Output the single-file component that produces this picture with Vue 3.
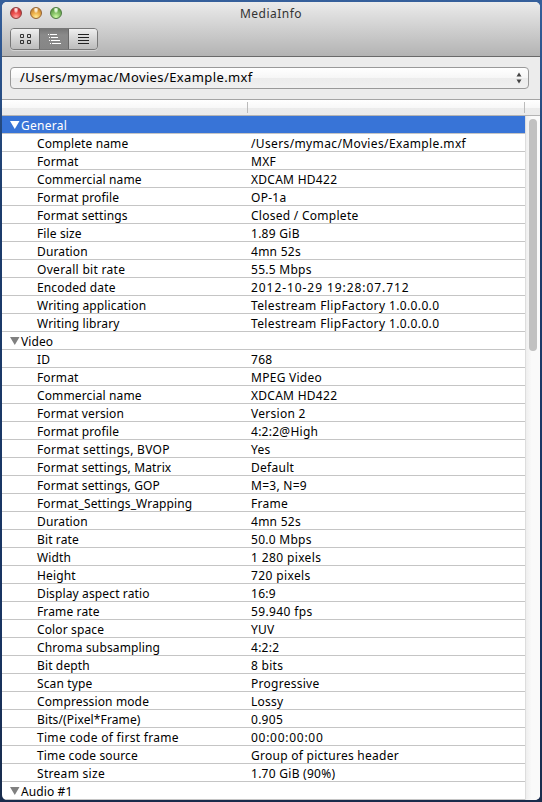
<script setup>
const general = [
  ['Complete name', '/Users/mymac/Movies/Example.mxf'],
  ['Format', 'MXF'],
  ['Commercial name', 'XDCAM HD422'],
  ['Format profile', 'OP-1a'],
  ['Format settings', 'Closed / Complete'],
  ['File size', '1.89 GiB'],
  ['Duration', '4mn 52s'],
  ['Overall bit rate', '55.5 Mbps'],
  ['Encoded date', '2012-10-29 19:28:07.712'],
  ['Writing application', 'Telestream FlipFactory 1.0.0.0.0'],
  ['Writing library', 'Telestream FlipFactory 1.0.0.0.0'],
]
const video = [
  ['ID', '768'],
  ['Format', 'MPEG Video'],
  ['Commercial name', 'XDCAM HD422'],
  ['Format version', 'Version 2'],
  ['Format profile', '4:2:2@High'],
  ['Format settings, BVOP', 'Yes'],
  ['Format settings, Matrix', 'Default'],
  ['Format settings, GOP', 'M=3, N=9'],
  ['Format_Settings_Wrapping', 'Frame'],
  ['Duration', '4mn 52s'],
  ['Bit rate', '50.0 Mbps'],
  ['Width', '1 280 pixels'],
  ['Height', '720 pixels'],
  ['Display aspect ratio', '16:9'],
  ['Frame rate', '59.940 fps'],
  ['Color space', 'YUV'],
  ['Chroma subsampling', '4:2:2'],
  ['Bit depth', '8 bits'],
  ['Scan type', 'Progressive'],
  ['Compression mode', 'Lossy'],
  ['Bits/(Pixel*Frame)', '0.905'],
  ['Time code of first frame', '00:00:00:00'],
  ['Time code source', 'Group of pictures header'],
  ['Stream size', '1.70 GiB (90%)'],
]
const sections = [
  { title: 'General', rows: general, selected: true },
  { title: 'Video', rows: video },
  { title: 'Audio #1', rows: [] },
]
const isDate = (v) => /^\d{4}-/.test(v)
const isTimecode = (v) => /^(\d\d:){3}/.test(v)
const isMixed = (v) => /^(\/|Tele|[\d. ]+ (pixels|fps))/.test(v)
const isLoose = (n) => /bit rate|first frame|Stream|BVOP/.test(n)
</script>

<template>
  <div class="desktop">
    <div class="window">
      <header class="toolbar">
        <div class="titlebar">
          <div class="lights">
            <i class="light red"></i><i class="light amber"></i><i class="light green"></i>
          </div>
          <div class="title">MediaInfo</div>
          <div class="balance"></div>
        </div>
        <div class="segments">
          <button class="segment">
            <svg width="12" height="12" viewBox="0 0 12 12" fill="none" stroke="#333" stroke-width="1">
              <path d="M.5 1.5h3v3h-3zM7.500 1.500h3v3h-3zM.5 7.500h3v3h-3zM7.500 7.500h3v3h-3z" />
            </svg>
          </button>
          <button class="segment active">
            <svg width="14" height="12" viewBox="0 0 14 12" stroke="#fff" stroke-width="1">
              <path d="M0 1.500h1M2 1.500h7M1 4.500h1M3 4.500h7M1 7.500h1M3 7.500h9M2 10.500h1M4 10.500h9" />
            </svg>
          </button>
          <button class="segment">
            <svg width="12" height="12" viewBox="0 0 12 12" stroke="#222" stroke-width="1">
              <path d="M0 1.500h11M0 4.500h11M0 7.500h11M0 10.500h11" />
            </svg>
          </button>
        </div>
      </header>
      <div class="chooser">
        <div class="popup">
          <span>/Users/mymac/Movies/Example.mxf</span>
          <svg width="6" height="12" viewBox="0 0 6 12" fill="#444">
            <path d="M3 .5L5.500 4.500H.5zM3 11.500L5.500 7.500H.5z" />
          </svg>
        </div>
      </div>
      <div class="columns">
        <div class="column"></div>
        <div class="column"></div>
      </div>
      <div class="body">
        <div class="list">
          <template v-for="s in sections" :key="s.title">
            <div class="row group" :class="{ selected: s.selected }">
              <svg width="10" height="8" viewBox="0 0 10 8"><path d="M0 0H9.500L4.750 8z" /></svg>
              <span>{{ s.title }}</span>
            </div>
            <div v-for="r in s.rows" :key="r[0]" class="row">
              <span class="name" :class="{ loose: isLoose(r[0]) }">{{ r[0] }}</span>
              <span class="value" :class="{ date: isDate(r[1]), timecode: isTimecode(r[1]), mixed: isMixed(r[1]) }">{{ r[1] }}</span>
            </div>
          </template>
        </div>
        <div class="scroll"><div class="thumb"></div></div>
      </div>
    </div>
  </div>
</template>

<style>
body { overflow: hidden; }
</style>

<style scoped>
* { box-sizing: border-box; }
.desktop {
  width: 542px;
  height: 802px;
  padding: 2px;
  background: linear-gradient(#355f9b 0, #2c548d 60px, #1c3c6c 200px, #183360 650px, #192c4c 100%);
  font: 12px/19px "Noto Sans", "Lucida Grande", sans-serif;
  color: #000;
}
.window {
  width: 538px;
  height: 798px;
  border-radius: 5px;
  overflow: hidden;
  background: #fff;
  display: flex;
  flex-direction: column;
}
.toolbar {
  height: 55px;
  flex: none;
  background: linear-gradient(#ebebeb, #d2d2d2 45%, #b3b3b3);
  border-bottom: 1px solid #696969;
}
.titlebar { display: flex; height: 22px; padding: 0 8px; }
.lights, .balance { width: 60px; display: flex; gap: 8px; align-items: center; }
.light {
  width: 12px;
  height: 12px;
  border-radius: 50%;
}
.red { background: radial-gradient(ellipse at 50% 15%, #fff 0, #f8b5b5 18%, transparent 34%), radial-gradient(circle at 50% 90%, #ffaaa6 0, #ee5250 40%, #c73537 75%); border: 1px solid #8d3c3c; }
.amber { background: radial-gradient(ellipse at 50% 15%, #fff 0, #f8dfb5 18%, transparent 34%), radial-gradient(circle at 50% 90%, #ffee9b 0, #f0b44d 40%, #c88a35 75%); border: 1px solid #936333; }
.green { background: radial-gradient(ellipse at 50% 15%, #fff 0, #d1efc3 18%, transparent 34%), radial-gradient(circle at 50% 90%, #d1ffa9 0, #8ac46a 40%, #60a047 75%); border: 1px solid #4c7940; }
.title { flex: 1; text-align: center; line-height: 23px; font-size: 12px; letter-spacing: .5px; color: #333; }
.segments {
  display: flex;
  width: 88px;
  height: 22px;
  margin: 4px 0 0 8px;
  border: 1px solid #777;
  border-radius: 4px;
  overflow: hidden;
  box-shadow: 0 1px 0 #d4d4d4;
}
.segment {
  flex: 1;
  display: flex;
  justify-content: center;
  align-items: center;
  padding: 0 0 0 1px;
  border: 0;
  background: linear-gradient(#efefef, #d4d4d4 50%, #bcbcbc);
}
.segment.active { flex: 0 0 30px; background: linear-gradient(#777, #8a8a8a 30%, #868686); border: 1px solid #696969; border-width: 0 1px; }
.chooser {
  height: 43px;
  flex: none;
  padding: 10px 11px 0 8px;
  background: #ececec;
  border-bottom: 1px solid #a5a5a5;
}
.popup {
  height: 22px;
  display: flex;
  align-items: center;
  justify-content: space-between;
  padding: 0 6px 0 9px;
  border: 1px solid #999;
  border-radius: 4px;
  background: linear-gradient(#fff, #f6f6f6 50%, #ececec 52%, #f0f0f0);
  letter-spacing: .39px;
  font-size: 13px;
}
.popup span { line-height: 18px; margin-top: -2px; }
.columns {
  height: 16px;
  flex: none;
  display: flex;
  background: linear-gradient(#fff, #f8f8f8 50%, #ececec 54%, #ebebeb);
  border-bottom: 1px solid #b4b4b4;
  padding: 2px 0;
}
.column { width: 246px; border-right: 1px solid #bbb; }
.column + .column { width: 277px; }
.body { flex: 1; display: flex; min-height: 0; }
.list { width: 523px; }
.row {
  height: 18px;
  display: flex;
  border-bottom: 1px solid #c5c5c5;
  letter-spacing: .27px;
  white-space: pre;
}
.name { width: 214px; margin-left: 35px; letter-spacing: .13px; }
.name.loose { letter-spacing: .3px; }
.mixed { letter-spacing: .37px; }
.date { letter-spacing: .93px; }
.timecode { letter-spacing: .72px; }
.group { padding-left: 8px; gap: 1px; }
.group:not(.selected) { letter-spacing: .1px; }
.group svg { fill: #808080; margin-top: 5px; }
.group span { padding-left: 0; }
.selected { background: #3874d7; color: #fff; }
.selected svg { fill: #fff; }
.scroll {
  flex: 1;
  padding: 3px 0 0 3px;
  background: linear-gradient(90deg, #eee, #fafafa 40%, #fafafa);
  border-left: 1px solid #ddd;
}
.thumb { width: 8px; height: 232px; border-radius: 4px; background: #c1c1c1; }
</style>
